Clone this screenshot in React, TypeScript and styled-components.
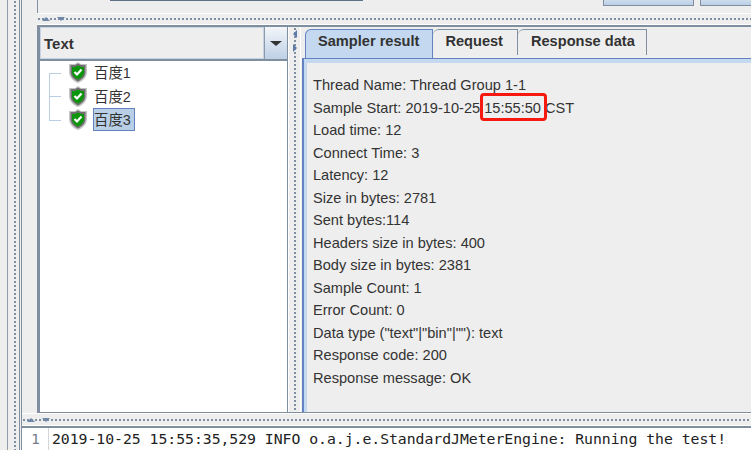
import React from "react";
import styled, { createGlobalStyle } from "styled-components";

const Global = createGlobalStyle`
  html, body { margin: 0; padding: 0; width: 751px; height: 450px; overflow: hidden; background: #eeeeee; }
  * { box-sizing: border-box; }
`;

const dotImage = `
  background-image: radial-gradient(circle at 2px 2px, #7f8fa3 1px, transparent 1.4px);
  background-size: 4px 4px;
`;

const Page = styled.div`
  width: 751px; height: 450px; display: flex; overflow: hidden; background: #eeeeee;
`;
const OuterStrip = styled.div`
  width: 22px; flex: none; display: flex; padding: 0 1px 0 7px; border-right: 1px solid #7f8fa0;
`;
const OuterGrip = styled.div`
  width: 13px; border-left: 1px solid #8f9dac; border-right: 1px solid #7f8fa0;
  ${dotImage} background-repeat: repeat-y; background-position: 5px 0;
`;
const Main = styled.div`
  flex: 1; min-width: 0; display: flex; flex-direction: column;
`;
const TopBar = styled.div`
  height: 13px; flex: none; display: flex; margin-left: 15px; padding-left: 72px; border-left: 1px solid #7f8fa0;
`;
const PathField = styled.div`
  width: 253px; flex: none; height: 1px; background: #5f7186;
`;
const TopButtons = styled.div`
  margin-left: 240px; display: flex; gap: 6px; flex: none;
`;
const TopButton = styled.div<{ $w: number }>`
  width: ${p => p.$w}px; height: 6px;
  background: linear-gradient(#cfdded, #b9cee5); border: 1px solid #7f8fa0; border-top: none;
`;
const HDivider = styled.div<{ $h: number; $inset: number }>`
  height: ${p => p.$h}px; flex: none; margin-left: ${p => p.$inset}px; display: flex; align-items: center; gap: 7px;
  border-top: 1px solid #ffffff; border-bottom: 1px solid #ffffff; padding-left: 5px;
  ${dotImage} background-repeat: repeat-x; background-position: 0 50%;
`;
const Arrow = styled.span<{ $down?: boolean }>`
  width: 0; height: 0; border-left: 4px solid transparent; border-right: 4px solid transparent;
  ${p => p.$down ? "border-top: 4px solid #6f87a8;" : "border-bottom: 4px solid #6f87a8;"}
`;
const Split = styled.div`
  height: 388px; flex: none; display: flex; margin-left: 15px; border-top: 2px solid #7f8fa0; border-bottom: 1px solid #7f8fa0;
`;
const LeftPane = styled.div`
  width: 251px; flex: none; display: flex; flex-direction: column; border-left: 3px solid #7f8fa0; border-right: 1px solid #7f8fa0;
`;
const Combo = styled.div`
  height: 34px; flex: none; display: flex; border-bottom: 2px solid #7f8fa0; background: #eeeeee;
`;
const ComboText = styled.div`
  flex: 1; display: flex; align-items: center; padding-left: 3px; border: 1px solid #c5d3e2;
  font: bold 15px "Liberation Sans", sans-serif; color: #333333;
`;
const ComboButton = styled.div`
  width: 23px; flex: none; display: flex; align-items: center; justify-content: center;
  background: linear-gradient(#f3f6fa, #bed0e5); border-left: 1px solid #8a9aab;
`;
const ComboArrow = styled.span`
  width: 0; height: 0; border-left: 6px solid transparent; border-right: 6px solid transparent; border-top: 5px solid #333333;
`;
const Tree = styled.div`
  flex: 1; background: #ffffff; display: flex; flex-direction: column;
`;
const Row = styled.div`
  height: 23.6px; display: flex; align-items: center; padding-left: 9px;
`;
const Branch = styled.span<{ $first?: boolean; $last?: boolean }>`
  width: 12px; height: 100%; flex: none; margin-right: 7px; position: relative;
  &::before {
    content: ""; position: absolute; left: 0; width: 1px; background: #b8cfe6;
    top: ${p => p.$first ? "50%" : "0"}; bottom: ${p => p.$last ? "50%" : "0"};
  }
  &::after { content: ""; position: absolute; left: 0; right: 0; top: 50%; height: 1px; background: #b8cfe6; }
`;
const NodeLabel = styled.span<{ $sel?: boolean }>`
  margin-left: 5px; padding: 0 3px 2px 0; height: 23px; display: flex; align-items: center;
  font: 14.4px "Liberation Sans", "Noto Sans CJK SC", sans-serif; color: #333333;
  border: 1px solid ${p => p.$sel ? "#6382bf" : "transparent"};
  background: ${p => p.$sel ? "#b8cfe5" : "transparent"};
`;
const VDivider = styled.div`
  width: 13px; flex: none; padding-top: 3px; display: flex; flex-direction: column; align-items: center; gap: 6px;
  border-left: 1px solid #ffffff; border-right: 1px solid #ffffff;
  ${dotImage} background-repeat: repeat-y; background-position: 4px 0;
`;
const ArrowSide = styled.span<{ $right?: boolean }>`
  width: 0; height: 0; border-top: 4px solid transparent; border-bottom: 4px solid transparent;
  ${p => p.$right ? "border-left: 4px solid #5f7aa8;" : "border-right: 4px solid #5f7aa8;"}
`;
const RightPane = styled.div`
  flex: 1; min-width: 0; display: flex; flex-direction: column; padding-left: 1px;
`;
const Tabs = styled.div`
  height: 31px; flex: none; display: flex; align-items: flex-start; padding: 2px 0 0 3px;
`;
const Tab = styled.div<{ $active?: boolean; $left?: number; $right?: number }>`
  height: ${p => p.$active ? 29 : 26}px; display: flex; align-items: flex-start;
  padding: 1px ${p => p.$right ?? 12}px 0 ${p => p.$left ?? 12}px;
  font: bold 14.6px/20px "Liberation Sans", sans-serif; color: #333333;
  border: 1px solid ${p => p.$active ? "#6382bf" : "#7f8fa0"};
  border-left: ${p => p.$active ? "1px solid #6382bf" : "none"}; border-bottom: none;
  border-top-left-radius: 6px;
  background: ${p => p.$active ? "#c4d9f0" : "#eeeeee"};
`;
const Content = styled.div`
  flex: 1; border-top: 1px solid #6382bf; border-left: 2px solid #6382bf; background: #eeeeee;
  box-shadow: inset 3px 4px 0 #c4d9f0; padding: 15px 0 0 9px;
  font: 14.6px/22.5px "Liberation Sans", sans-serif; color: #333333;
`;
const Line = styled.div`
  height: 22.5px; white-space: pre;
`;
const Marked = styled.span`
  position: relative;
  &::after {
    content: ""; position: absolute; left: -4px; right: -6px; top: -7px; bottom: -5px;
    border: 3px solid #f5190f; border-radius: 4px;
  }
`;
const LogPane = styled.div`
  flex: 1; display: flex; background: #ffffff; border-top: 2px solid #7f8fa0;
`;
const Gutter = styled.div`
  width: 27px; flex: none; text-align: right; padding: 2px 8px 0 0; border-right: 1px solid #d6d6d6;
  font: 14.8px "DejaVu Sans Mono", monospace; color: #75808c;
`;
const LogText = styled.div`
  padding: 2px 0 0 3px; white-space: pre; color: #222222; letter-spacing: -0.04px;
  font-family: "DejaVu Sans Mono", monospace; font-size: 14.8px;
`;

const Shield = () => (
  <svg width="20" height="21" viewBox="0 0 20 21" style={{ flex: "none" }}>
    <path d="M10 0 L13 2 L19 2 V10 C19 15 15 19 10 21 C5 19 1 15 1 10 V2 L7 2 Z" fill="#c4c4c4" />
    <path d="M10 1.5 L13 3 L17.5 3 V10 C17.5 14.5 14 17.5 10 19.5 C6 17.5 2.5 14.5 2.5 10 V3 L7 3 Z" fill="#6f6f6f" />
    <path d="M10 3.5 L13 5 L16 5 V10 C16 13.5 13 16 10 17.5 C7 16 4 13.5 4 10 V5 L7 5 Z" fill="#0a960a" />
    <path d="M6.5 10 L9 12.5 L13.5 7.5" fill="none" stroke="#ffffff" strokeWidth="2.2" />
  </svg>
);

const lines = [
  "Load time: 12", "Connect Time: 3", "Latency: 12", "Size in bytes: 2781", "Sent bytes:114",
  "Headers size in bytes: 400", "Body size in bytes: 2381", "Sample Count: 1", "Error Count: 0",
  'Data type ("text"|"bin"|""): text', "Response code: 200", "Response message: OK",
];

export default function App() {
  return (
    <Page>
      <Global />
      <OuterStrip><OuterGrip /></OuterStrip>
      <Main>
        <TopBar>
          <PathField />
          <TopButtons>
            <TopButton $w={91} />
            <TopButton $w={60} />
          </TopButtons>
        </TopBar>
        <HDivider $h={12} $inset={15}><Arrow /><Arrow $down /></HDivider>
        <Split>
          <LeftPane>
            <Combo>
              <ComboText>Text</ComboText>
              <ComboButton><ComboArrow /></ComboButton>
            </Combo>
            <Tree>
              {["百度1", "百度2", "百度3"].map((t, i) => (
                <Row key={t}>
                  <Branch $first={i === 0} $last={i === 2} />
                  <Shield />
                  <NodeLabel $sel={i === 2}>{t}</NodeLabel>
                </Row>
              ))}
            </Tree>
          </LeftPane>
          <VDivider><ArrowSide /><ArrowSide $right /></VDivider>
          <RightPane>
            <Tabs>
              <Tab $active $right={13}>Sampler result</Tab>
              <Tab $right={14}>Request</Tab>
              <Tab $left={13} $right={11}>Response data</Tab>
            </Tabs>
            <Content>
              <Line>Thread Name: Thread Group 1-1</Line>
              <Line>Sample Start: 2019-10-25 <Marked>15:55:50</Marked> CST</Line>
              {lines.map(l => <Line key={l}>{l}</Line>)}
            </Content>
          </RightPane>
        </Split>
        <HDivider $h={13} $inset={0}><Arrow /><Arrow $down /></HDivider>
        <LogPane>
          <Gutter>1</Gutter>
          <LogText>2019-10-25 15:55:35,529 INFO o.a.j.e.StandardJMeterEngine: Running the test!</LogText>
        </LogPane>
      </Main>
    </Page>
  );
}
